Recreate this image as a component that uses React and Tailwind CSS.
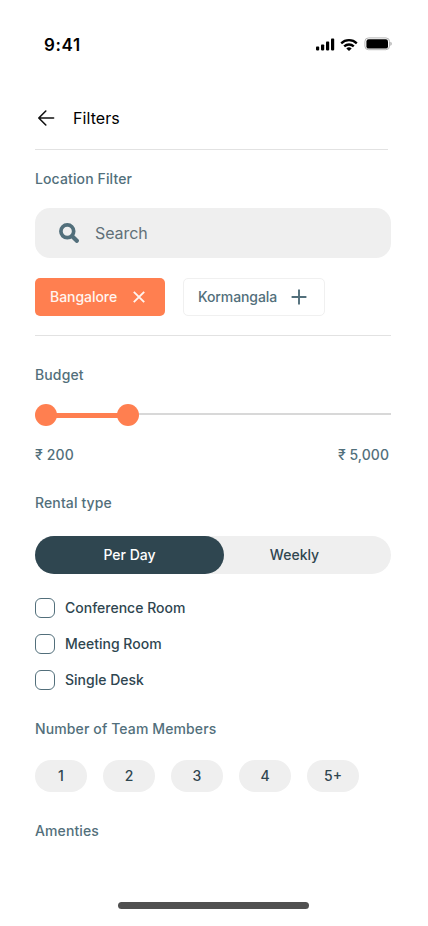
import { useState } from 'react';

const ROOMS = ['Conference Room', 'Meeting Room', 'Single Desk'];
const TEAM_SIZES = ['1', '2', '3', '4', '5+'];

function StatusBar() {
  return (
    <div className="flex h-[90px] items-center justify-between pr-[36px] pl-[44px]">
      <span className="text-[17px] leading-5 font-semibold tracking-[0.6px] text-black">9:41</span>
      <div className="flex items-center">
        <svg width="19" height="13" viewBox="0 0 19 13" className="-mt-px">
          <rect x="0" y="8.6" width="3.2" height="3.8" rx="0.8" />
          <rect x="5" y="6.4" width="3.2" height="6" rx="0.8" />
          <rect x="10" y="3.6" width="3.2" height="8.8" rx="0.8" />
          <rect x="15" y="0.6" width="3.2" height="11.8" rx="0.8" />
        </svg>
        <svg width="18" height="12" viewBox="0 0 18 12" className="ml-[5px]" fill="none" stroke="#000" strokeWidth="2.3">
          <path d="M1.2 4.3a11.3 11.3 0 0 1 15.6 0" />
          <path d="M4.2 7.4a7 7 0 0 1 9.6 0" />
          <path d="M9 12 6.3 9.4a4 4 0 0 1 5.4 0Z" fill="#000" stroke="none" />
        </svg>
        <svg width="28" height="14" viewBox="0 0 28 14" className="-mt-[3px] ml-[6px]">
          <rect x="0.9" y="0.9" width="24.6" height="11.8" rx="3.6" fill="none" stroke="#b5b5b5" />
          <rect x="2.4" y="2.2" width="21.6" height="9.4" rx="2.2" />
          <path d="M26.4 4.8v4c.8-.3 1.3-1.1 1.3-2s-.5-1.7-1.3-2Z" fill="#a8a8a8" />
        </svg>
      </div>
    </div>
  );
}

function SectionTitle({ children }) {
  return <h2 className="text-sm leading-5 font-medium tracking-[0.12px] text-[#526f7b]">{children}</h2>;
}

export default function App() {
  const [rental, setRental] = useState('day');

  return (
    <div className="flex h-[926px] w-[428px] flex-col overflow-hidden bg-white font-['Inter',sans-serif]">
      <StatusBar />
      <main className="flex w-[391px] flex-1 flex-col pl-[35px]">
        <header className="mt-4 flex h-6 items-center">
          <svg width="22" height="20" viewBox="0 0 22 20" fill="none" stroke="#111" strokeWidth="1.6" strokeLinecap="round" strokeLinejoin="round">
            <path d="M18.6 10H4M10.8 3 3.8 10l7 7" />
          </svg>
          <h1 className="ml-4 text-base font-normal tracking-[0.08px] text-black">Filters</h1>
        </header>
        <div className="mt-[19px] mr-[3px] h-px bg-[#e2e2e2]" />

        <div className="mt-[19px]">
          <SectionTitle>Location Filter</SectionTitle>
        </div>
        <div className="mt-[19px] flex h-[50px] items-center rounded-[15px] bg-[#efefef] pl-6">
          <svg width="20" height="20" viewBox="0 0 20 20" fill="none" stroke="#526f7b">
            <circle cx="8.3" cy="8.3" r="6.4" strokeWidth="3.7" />
            <path d="m13.2 13.2 4.6 4.6" strokeWidth="4.2" strokeLinecap="round" />
          </svg>
          <span className="ml-4 text-base tracking-[-0.08px] text-[#617078]">Search</span>
        </div>
        <div className="mt-5 flex gap-[18px]">
          <button className="flex h-[38px] w-[130px] items-center rounded-[5px] bg-[#ff7f50] pl-[15px] text-sm font-medium text-[#fff4ef]">
            <span className="w-[83px] text-left tracking-[-0.05px]">Bangalore</span>
            <svg width="12" height="12" viewBox="0 0 12 12" stroke="currentColor" strokeWidth="1.9">
              <path d="m.8.8 10.4 10.4M11.2.8.8 11.2" />
            </svg>
          </button>
          <button className="flex h-[38px] w-[142px] items-center rounded-[5px] border border-[#f0f0f0] pl-[14px] text-sm font-medium text-[#526f7b]">
            <span className="w-[93px] text-left tracking-[-0.1px]">Kormangala</span>
            <svg width="16" height="16" viewBox="0 0 16 16" stroke="currentColor" strokeWidth="1.9">
              <path d="M8 .6v14.8M.6 8h14.8" />
            </svg>
          </button>
        </div>
        <div className="mt-[19px] h-px bg-[#e2e2e2]" />

        <div className="mt-[29px]">
          <SectionTitle>Budget</SectionTitle>
        </div>
        <div className="mt-[19px] flex h-[22px] items-center">
          <span className="size-[22px] rounded-full bg-[#ff7f50]" />
          <span className="-mx-1 mt-px h-[5px] w-[68px] bg-[#ff7f50]" />
          <span className="size-[22px] rounded-full bg-[#ff7f50]" />
          <span className="-mt-0.5 h-0.5 flex-1 bg-[#d8d8d8]" />
        </div>
        <div className="mt-[19px] flex justify-between pr-0.5 text-sm leading-5 font-medium text-[#526f7b]">
          <span className="tracking-[0.15px]">₹ 200</span>
          <span className="tracking-[0.05px]">₹ 5,000</span>
        </div>

        <div className="mt-7">
          <SectionTitle>Rental type</SectionTitle>
        </div>
        <div className="mt-[23px] flex h-[38px] rounded-full bg-[#efefef] text-sm font-medium">
          <button onClick={() => setRental('day')} className={rental === 'day' ? 'w-[189px] rounded-full bg-[#2f4650] text-white' : 'w-[189px] rounded-full text-[#2f4650]'}>
            Per Day
          </button>
          <button onClick={() => setRental('week')} className={rental === 'week' ? 'flex-1 rounded-full bg-[#2f4650] text-white' : 'flex-1 rounded-full pr-[26px] text-[#2f4650]'}>
            Weekly
          </button>
        </div>
        <div className="mt-6 flex flex-col gap-4">
          {ROOMS.map((room) => (
            <label key={room} className="flex h-5 items-center gap-2.5 text-sm font-medium text-[#2f4650]">
              <input type="checkbox" className="size-5 appearance-none rounded-[6px] border border-[#526f7b] checked:bg-[#526f7b]" />
              {room}
            </label>
          ))}
        </div>

        <div className="mt-[29px]">
          <SectionTitle>Number of Team Members</SectionTitle>
        </div>
        <div className="mt-[21px] flex gap-4">
          {TEAM_SIZES.map((size) => (
            <button key={size} className="h-8 w-[52px] rounded-full bg-[#efefef] text-sm font-medium text-[#2f4650]">
              {size}
            </button>
          ))}
        </div>

        <div className="mt-[29px]">
          <SectionTitle>Amenties</SectionTitle>
        </div>
      </main>
      <div className="mb-[17px] ml-[118px] h-[7px] w-[191px] rounded-full bg-[#505050]" />
    </div>
  );
}
